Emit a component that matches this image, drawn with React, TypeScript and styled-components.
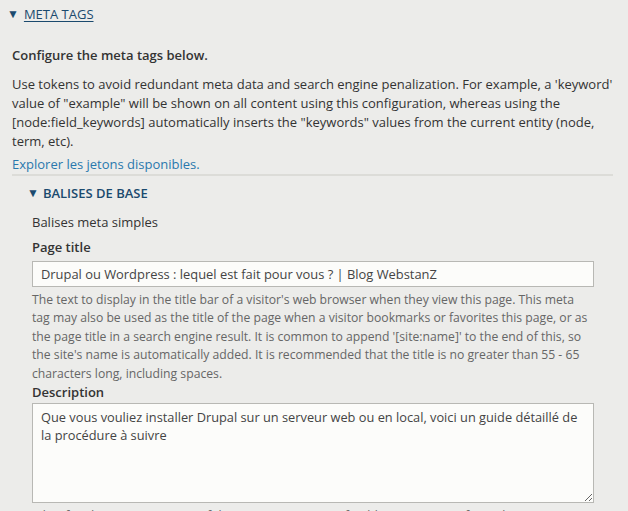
import React from 'react';
import styled, { createGlobalStyle } from 'styled-components';

const GlobalStyle = createGlobalStyle`
  html, body {
    margin: 0;
    padding: 0;
    background: #ececea;
  }
  body {
    font-family: 'Open Sans', 'Liberation Sans', sans-serif;
    font-size: 13px;
    color: #333;
  }
`;

const Page = styled.div`
  width: 628px;
  height: 511px;
  overflow: hidden;
  padding: 4px 12px 0 12px;
  box-sizing: border-box;
`;

const Summary = styled.div<{ $nested?: boolean }>`
  display: flex;
  align-items: center;
  gap: ${(p) => (p.$nested ? '4px' : '5px')};
  height: 20px;
  margin-left: ${(p) => (p.$nested ? '15px' : '-5px')};
  color: #1b4a6e;
  font-size: 13px;
  font-weight: ${(p) => (p.$nested ? 600 : 400)};
  text-transform: uppercase;
`;

const Arrow = styled.span`
  font-size: 12px;
  line-height: 1;
  color: #1b4a6e;
`;

const SummaryLink = styled.a`
  color: inherit;
  text-decoration: underline;
  text-underline-offset: 2px;
`;

const Body = styled.div`
  padding-top: 22px;
`;

const Lead = styled.p`
  margin: 0 0 10px 0;
  font-weight: 600;
  line-height: 19px;
`;

const Para = styled.p`
  margin: 0 0 4px 0;
  line-height: 19px;
`;

const TokenLink = styled.a`
  display: block;
  color: #2a78ad;
  text-decoration: none;
  line-height: 19px;
  border-bottom: 2px solid #dcdcd8;
  margin-right: 3px;
`;

const Nested = styled.div`
  padding-top: 7px;
`;

const Group = styled.div`
  padding-left: 20px;
`;

const GroupDesc = styled.div`
  margin-top: 10px;
  line-height: 19px;
`;

const Field = styled.div`
  margin-top: 6px;

  & + & {
    margin-top: 0;
  }
`;

const Label = styled.label`
  display: block;
  font-weight: 600;
  line-height: 19px;
  margin-bottom: 1px;
`;

const TextInput = styled.input`
  display: block;
  box-sizing: border-box;
  width: 562px;
  height: 26px;
  margin-top: 4px;
  padding: 0 8px;
  border: 1px solid #b8b8b4;
  border-radius: 0;
  background: #fcfcfa;
  font-family: inherit;
  font-size: 12.9px;
  color: #444;
  outline: none;
`;

const TextArea = styled.textarea`
  display: block;
  box-sizing: border-box;
  width: 562px;
  height: 100px;
  padding: 4px 6px 3px 8px;
  border: 1px solid #b8b8b4;
  border-radius: 0;
  background: #fcfcfa;
  font-family: inherit;
  font-size: 12.8px;
  line-height: 18px;
  color: #444;
  outline: none;
  resize: vertical;
`;

const Help = styled.div`
  font-size: 12.2px;
  line-height: 18.4px;
  color: #666;
  margin-top: 4px;
  width: 562px;
`;

export default function App() {
  return (
    <>
      <GlobalStyle />
      <Page>
        <Summary>
          <Arrow>▼</Arrow>
          <SummaryLink href="#">Meta tags</SummaryLink>
        </Summary>
        <Body>
          <Lead>Configure the meta tags below.</Lead>
          <Para>
            Use tokens to avoid redundant meta data and search engine penalization. For example, a 'keyword'
            value of "example" will be shown on all content using this configuration, whereas using the
            [node:field_keywords] automatically inserts the "keywords" values from the current entity (node,
            term, etc).
          </Para>
          <TokenLink href="#">Explorer les jetons disponibles.</TokenLink>
          <Nested>
            <Summary $nested>
              <Arrow>▼</Arrow>
              <span>Balises de base</span>
            </Summary>
            <Group>
              <GroupDesc>Balises meta simples</GroupDesc>
              <Field>
                <Label>Page title</Label>
                <TextInput defaultValue="Drupal ou Wordpress : lequel est fait pour vous ? | Blog WebstanZ" />
                <Help>
                  The text to display in the title bar of a visitor's web browser when they view this page. This meta
                  tag may also be used as the title of the page when a visitor bookmarks or favorites this page, or as
                  the page title in a search engine result. It is common to append '[site:name]' to the end of this, so
                  the site's name is automatically added. It is recommended that the title is no greater than 55 - 65
                  characters long, including spaces.
                </Help>
              </Field>
              <Field>
                <Label>Description</Label>
                <TextArea defaultValue="Que vous vouliez installer Drupal sur un serveur web ou en local, voici un guide détaillé de la procédure à suivre" />
                <Help>
                  A brief and concise summary of the page's content, preferably a maximum of 160 characters in length.
                </Help>
              </Field>
            </Group>
          </Nested>
        </Body>
      </Page>
    </>
  );
}
